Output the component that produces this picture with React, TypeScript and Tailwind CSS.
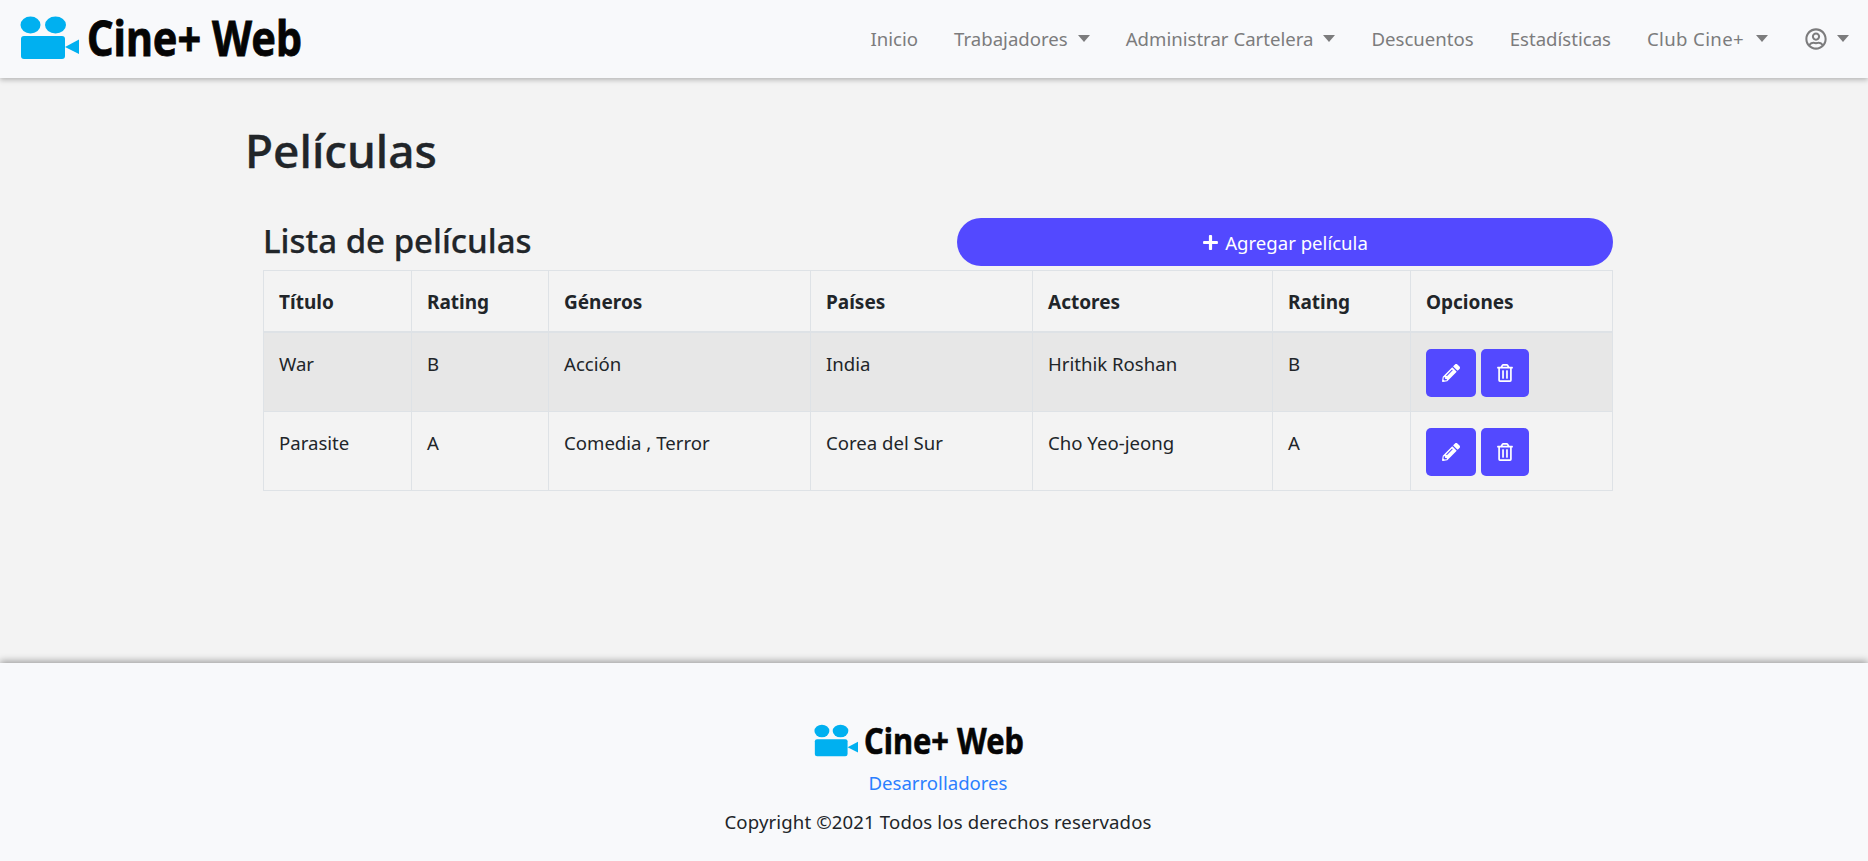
import { FaPencilAlt, FaPlus, FaRegTrashAlt, FaRegUserCircle } from "react-icons/fa";

function Logo({ className }: { className: string }) {
  return (
    <svg viewBox="0 0 290 43" className={`overflow-visible ${className}`}>
      <ellipse cx="10.5" cy="8" rx="10" ry="8.5" fill="#00b0f0" />
      <ellipse cx="35.5" cy="8" rx="10.5" ry="8.5" fill="#00b0f0" />
      <rect x="1" y="19" width="44" height="23" rx="3" fill="#00b0f0" />
      <path d="M45 30 L59 22.5 V37 Z" fill="#00b0f0" />
      <text
        transform="translate(67 39) scale(0.845 1)"
        fontFamily="'Noto Sans', sans-serif"
        fontWeight="700"
        fontSize="49"
        fill="#050505"
        stroke="#050505"
        strokeWidth="0.8"
      >
        Cine+ Web
      </text>
    </svg>
  );
}

function Caret() {
  return <span className="ml-[10px] inline-block border-x-[6px] border-t-[7px] border-x-transparent border-t-[#7c7c7d]" />;
}

function NavItem({ label, caret, className }: { label: string; caret?: boolean; className?: string }) {
  return (
    <a className={`flex items-center px-[18px] text-[#7c7c7d] ${className ?? ""}`}>
      {label}
      {caret && <Caret />}
    </a>
  );
}

const rows = [
  ["War", "B", "Acción", "India", "Hrithik Roshan", "B"],
  ["Parasite", "A", "Comedia , Terror", "Corea del Sur", "Cho Yeo-jeong", "A"],
];
const headers = ["Título", "Rating", "Géneros", "Países", "Actores", "Rating", "Opciones"];
const widths = ["w-[148px]", "w-[137px]", "w-[262px]", "w-[222px]", "w-[240px]", "w-[138px]", "w-[202px]"];

export default function App() {
  return (
    <div className="flex min-h-screen flex-col bg-[#f3f3f3] text-[18.6px] text-[#212529] [font-family:'Noto_Sans',sans-serif]">
      <header className="relative z-10 flex h-[78px] items-center justify-between bg-[#f8f9fb] pl-[20px] shadow-[0_2px_5px_rgba(0,0,0,0.25)]">
        <Logo className="mt-[-1px] h-[43px] w-[290px]" />
        <nav className="flex items-center">
          <NavItem label="Inicio" />
          <NavItem label="Trabajadores" caret />
          <NavItem label="Administrar Cartelera" caret />
          <NavItem label="Descuentos" />
          <NavItem label="Estadísticas" />
          <NavItem label="Club Cine+" caret className="pr-[19px] tracking-[0.35px] [&>span]:ml-[12px]" />
          <a className="flex items-center pl-[18px] pr-[19px] text-[#7c7c7d]">
            <FaRegUserCircle className="text-[22px]" />
            <Caret />
          </a>
        </nav>
      </header>

      <main className="h-[585px] pl-[245px] pt-[42px]">
        <h1 className="text-[46px] leading-[60px] font-medium [-webkit-text-stroke:0.4px_#212529]">Películas</h1>
        <div className="ml-[18px] mt-[38px] w-[1350px]">
          <div className="flex h-[48px] items-center justify-between">
            <h3 className="mt-[-2px] text-[33px] font-medium leading-[42px] [-webkit-text-stroke:0.25px_#212529]">Lista de películas</h3>
            <button className="flex h-[48px] w-[656px] items-center justify-center gap-[6px] rounded-[24px] bg-[#5349ff] pt-[1px] text-white">
              <FaPlus className="text-[17px]" />
              Agregar película
            </button>
          </div>
          <table className="mt-[4px] w-[1349px] table-fixed border-collapse">
            <thead>
              <tr className="h-[61px]">
                {headers.map((h, i) => (
                  <th key={i} className={`${widths[i]} border border-b-2 border-[#dee2e6] px-[15px] pt-[2px] text-left text-[19px] font-bold`}>
                    {h}
                  </th>
                ))}
              </tr>
            </thead>
            <tbody>
              {rows.map((r, ri) => (
                <tr key={ri} className={ri === 0 ? "h-[80px] bg-[#e7e7e7]" : "h-[79px]"}>
                  {r.map((c, ci) => (
                    <td key={ci} className="border border-[#dee2e6] px-[15px] pt-[16px] align-top leading-[30px]">
                      {c}
                    </td>
                  ))}
                  <td className="border border-[#dee2e6] px-[15px] pt-[16px] align-top">
                    <div className="flex gap-[5px]">
                      <button className="flex h-[48px] w-[50px] items-center justify-center rounded-[5px] bg-[#5349ff] text-white">
                        <FaPencilAlt className="text-[18px]" />
                      </button>
                      <button className="flex h-[48px] w-[48px] items-center justify-center rounded-[5px] bg-[#5349ff] text-white">
                        <FaRegTrashAlt className="text-[18px]" />
                      </button>
                    </div>
                  </td>
                </tr>
              ))}
            </tbody>
          </table>
        </div>
      </main>

      <footer className="relative flex h-[198px] flex-col items-center bg-[#f8f9fb] pl-[8px] pt-[62px] shadow-[0_-2px_7px_rgba(0,0,0,0.35)]">
        <Logo className="mr-[32px] h-[32px] w-[216px]" />
        <a className="mt-[11px] leading-[30px] text-[#2b7fff]">Desarrolladores</a>
        <p className="mt-[9px] leading-[30px] tracking-[0.13px]">Copyright ©2021 Todos los derechos reservados</p>
      </footer>
    </div>
  );
}
